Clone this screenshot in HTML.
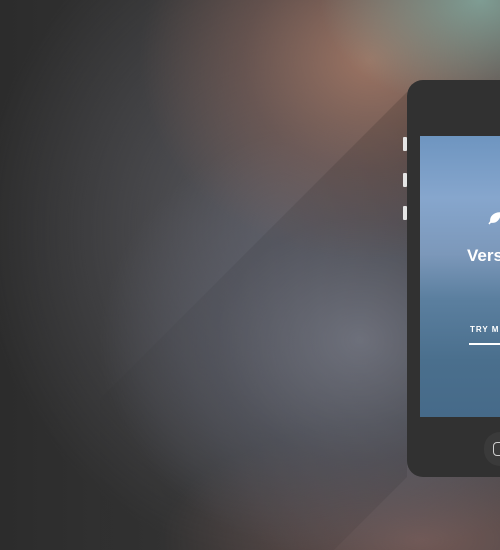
<!DOCTYPE html>
<html><head><style>
html,body{margin:0;padding:0;overflow:hidden;width:500px;height:550px}
body{position:relative;font-family:"Liberation Sans",sans-serif;
background:
radial-gradient(ellipse 160px 110px at 480px 0px, rgba(130,165,155,0.9), rgba(130,165,155,0) 100%),
radial-gradient(ellipse 230px 200px at 370px 60px, rgba(160,118,100,0.95), rgba(140,100,88,0.45) 55%, rgba(110,80,70,0) 100%),
radial-gradient(ellipse 260px 220px at 360px 340px, rgba(120,123,135,1), rgba(95,98,110,0.6) 55%, rgba(80,80,90,0) 100%),
radial-gradient(ellipse 260px 120px at 420px 540px, rgba(120,92,88,0.9), rgba(100,80,80,0) 100%),
radial-gradient(ellipse 300px 330px at 280px 230px, rgba(88,88,94,1), rgba(60,60,62,0) 100%),
linear-gradient(90deg,#2c2c2c,#343434 40%,#3e3e40);}
.shadow{position:absolute;left:0;top:0}
.phone{position:absolute;left:407px;top:80px;width:93px;height:397px;background:#313131;border-radius:16px 0 0 16px}
.screen{position:absolute;left:420px;top:136px;width:80px;height:281px;
background:linear-gradient(180deg,#6e95c0 0%,#86a6cd 22%,#7c98ba 42%,#5b7f9f 58%,#4a6f8d 80%,#466a89 100%)}
.btn{position:absolute;left:403px;width:4px;height:14px;background:#e5e5e5;border-radius:1px}
.t{position:absolute;color:#fff;font-weight:bold;white-space:nowrap}
.home{position:absolute;left:484px;top:432px;width:16px;height:34px;border-radius:17px 0 0 17px;background:#3a3a3a;overflow:hidden}
.home:after{content:"";position:absolute;left:9px;top:10px;width:12px;height:12px;border:1.5px solid #cfcfcf;border-radius:4px}
</style></head><body>
<svg class="shadow" width="500" height="550"><defs><linearGradient id="g" x1="1" y1="0" x2="0" y2="1"><stop offset="0" stop-color="#000" stop-opacity="0.14"/><stop offset="0.55" stop-color="#000" stop-opacity="0.04"/><stop offset="1" stop-color="#000" stop-opacity="0"/></linearGradient></defs>
<polygon points="407,92 407,477 100,784 100,399" fill="url(#g)"/></svg>
<div class="phone"></div>
<div class="btn" style="top:137px"></div>
<div class="btn" style="top:173px"></div>
<div class="btn" style="top:206px"></div>
<div class="screen"></div>
<svg style="position:absolute;left:488px;top:211px" width="12" height="14" viewBox="0 0 12 14"><path d="M1 13 L4 9 M3 11 C2 6 6 2 12 2 C12 8 8 12 3 11 Z" fill="#fff" stroke="#fff" stroke-width="1.5"/></svg>
<div class="t" style="left:467px;top:246px;font-size:17px">Versa</div>
<div class="t" style="left:470px;top:325px;font-size:8px;letter-spacing:1px">TRY ME</div>
<div style="position:absolute;left:469px;top:343px;width:31px;height:2px;background:#fff"></div>
<div class="home"></div>
</body></html>
